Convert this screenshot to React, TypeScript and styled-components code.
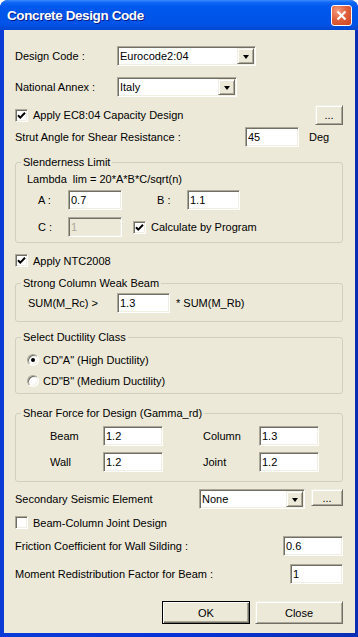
import styled, { createGlobalStyle, css } from 'styled-components'

const GlobalStyle = createGlobalStyle`
  * { box-sizing: border-box; }
  body {
    margin: 0;
    background: #fff;
    font-family: "Liberation Sans", Arial, sans-serif;
    font-size: 11px;
    color: #000;
  }
`

const sunken = css`
  border: 1px solid;
  border-color: #aca899 #fff #fff #aca899;
  box-shadow: inset 1px 1px 0 #716f64, inset -1px -1px 0 #f1efe2;
`

const raised = css`
  border: 1px solid;
  border-color: #f1efe2 #716f64 #716f64 #f1efe2;
  box-shadow: inset 1px 1px 0 #fff, inset -1px -1px 0 #aca899;
`

const Window = styled.div`
  width: 358px;
  height: 637px;
  display: flex;
  flex-direction: column;
  background: linear-gradient(90deg, #0a3bd6 0%, #0831d9 50%, #0a2fb5 100%);
  border-radius: 8px 8px 0 0;
  overflow: hidden;
`

const TitleBar = styled.div`
  height: 30px;
  flex: none;
  display: flex;
  align-items: center;
  justify-content: space-between;
  padding: 0 6px 0 7px;
  background: linear-gradient(
    180deg,
    #3a8cff 0%,
    #1068f5 8%,
    #0058ee 22%,
    #0055e8 55%,
    #0053e6 80%,
    #0047d0 100%
  );
`

const Title = styled.span`
  font-family: "Liberation Sans", Arial, sans-serif;
  font-weight: bold;
  font-size: 13.5px;
  letter-spacing: -0.4px;
  color: #fff;
  text-shadow: 1px 1px 0 #0a1a8a;
`

const CloseButton = styled.button`
  width: 21px;
  height: 21px;
  padding: 0;
  border: 1px solid #fff;
  border-radius: 3px;
  background: radial-gradient(circle at 30% 25%, #f39a7e 0%, #e2613d 45%, #cc4520 100%);
  display: flex;
  align-items: center;
  justify-content: center;
`

const Client = styled.div`
  flex: 1;
  margin: 0 3px 4px 4px;
  background: #ece9d8;
  padding: 0 12px 0 11px;
  display: flex;
  flex-direction: column;
`

const Row = styled.div<{ $mt: number; $h?: number; $pl?: number }>`
  display: flex;
  align-items: center;
  margin-top: ${(p) => p.$mt}px;
  height: ${(p) => p.$h ?? 20}px;
  padding-left: ${(p) => p.$pl ?? 0}px;
  flex: none;
`

const Label = styled.span<{ $w?: number }>`
  width: ${(p) => (p.$w ? `${p.$w}px` : 'auto')};
  flex: none;
  white-space: nowrap;
`

const Spacer = styled.span<{ $w?: number }>`
  flex: ${(p) => (p.$w ? 'none' : '1')};
  width: ${(p) => (p.$w ? `${p.$w}px` : 'auto')};
`

const TextBox = styled.input<{ $w: number }>`
  ${sunken};
  width: ${(p) => p.$w}px;
  height: 20px;
  padding: 0 2px;
  flex: none;
  font: 11px "Liberation Sans", Arial, sans-serif;
  color: #000;
  background: #fff;
  outline: none;
  &:disabled {
    background: #ece9d8;
    color: #aca899;
  }
`

const Combo = styled.div<{ $w: number }>`
  ${sunken};
  width: ${(p) => p.$w}px;
  height: 20px;
  flex: none;
  background: #fff;
  display: flex;
  align-items: center;
  padding: 1px 1px 1px 2px;
`

const ComboText = styled.span`
  flex: 1;
`

const DropButton = styled.span`
  ${raised};
  width: 17px;
  height: 16px;
  background: #ece9d8;
  display: flex;
  align-items: center;
  justify-content: center;
`

const Arrow = styled.span`
  width: 0;
  height: 0;
  border-left: 3.5px solid transparent;
  border-right: 3.5px solid transparent;
  border-top: 4px solid #000;
  margin-top: 1px;
`

const Button = styled.button<{ $w: number; $h: number; $default?: boolean; $top?: boolean }>`
  ${raised};
  width: ${(p) => p.$w}px;
  height: ${(p) => p.$h}px;
  flex: none;
  align-self: ${(p) => (p.$top ? 'flex-start' : 'auto')};
  padding: 0;
  background: #ece9d8;
  font: 11px "Liberation Sans", Arial, sans-serif;
  color: #000;
  ${(p) =>
    p.$default &&
    css`
      border: 1px solid #000;
      box-shadow: inset 1px 1px 0 #fff, inset -1px -1px 0 #716f64, inset -2px -2px 0 #aca899;
    `}
`

const CheckBox = styled.span`
  ${sunken};
  width: 13px;
  height: 13px;
  flex: none;
  background: #fff;
  display: flex;
  align-items: center;
  justify-content: center;
  margin-right: 5px;
`

const Radio = styled.span<{ $on?: boolean }>`
  width: 12px;
  height: 12px;
  flex: none;
  border-radius: 50%;
  border: 1px solid;
  border-color: #aca899 #fff #fff #aca899;
  box-shadow: inset 1px 1px 0 #716f64, inset -1px -1px 0 #f1efe2;
  background: #fff;
  display: flex;
  align-items: center;
  justify-content: center;
  margin-right: 4px;
  &::after {
    content: '';
    display: ${(p) => (p.$on ? 'block' : 'none')};
    width: 4px;
    height: 4px;
    border-radius: 50%;
    background: #000;
  }
`

const Group = styled.fieldset<{ $mt: number; $pt: number; $pb: number }>`
  margin: ${(p) => p.$mt}px 0 0;
  padding: ${(p) => p.$pt}px 0 ${(p) => p.$pb}px 0;
  border: 1px solid #d0d0bf;
  border-radius: 3px;
  min-width: 0;
  flex: none;
`

const GroupTitle = styled.legend`
  margin-left: 5px;
  padding: 0 2px;
  line-height: 13px;
  font-size: 11px;
`

const Check = () => (
  <svg width="9" height="9" viewBox="0 0 9 9">
    <path d="M1 4.2 L3.3 6.6 L8 1.8" fill="none" stroke="#000" strokeWidth="2" />
  </svg>
)

const Combobox = ({ w, value }: { w: number; value: string }) => (
  <Combo $w={w}>
    <ComboText>{value}</ComboText>
    <DropButton>
      <Arrow />
    </DropButton>
  </Combo>
)

export default function App() {
  return (
    <>
      <GlobalStyle />
      <Window>
        <TitleBar>
          <Title>Concrete Design Code</Title>
          <CloseButton aria-label="Close">
            <svg width="11" height="11" viewBox="0 0 11 11">
              <path d="M1.5 1.5 L9.5 9.5 M9.5 1.5 L1.5 9.5" stroke="#fff" strokeWidth="2.2" />
            </svg>
          </CloseButton>
        </TitleBar>
        <Client>
          <Row $mt={16}>
            <Label $w={102}>Design Code :</Label>
            <Combobox w={139} value="Eurocode2:04" />
          </Row>
          <Row $mt={11}>
            <Label $w={102}>National Annex :</Label>
            <Combobox w={120} value="Italy" />
          </Row>
          <Row $mt={8}>
            <CheckBox>
              <Check />
            </CheckBox>
            <Label>Apply EC8:04 Capacity Design</Label>
            <Spacer />
            <Button $w={28} $h={20}>...</Button>
          </Row>
          <Row $mt={2}>
            <Label $w={230}>Strut Angle for Shear Resistance :</Label>
            <TextBox $w={54} defaultValue="45" />
            <Spacer $w={10} />
            <Label>Deg</Label>
          </Row>

          <Group $mt={9} $pt={3} $pb={5}>
            <GroupTitle>Slenderness Limit</GroupTitle>
            <Row $mt={0} $h={14} $pl={11}>
              <Label>Lambda&nbsp; lim = 20*A*B*C/sqrt(n)</Label>
            </Row>
            <Row $mt={4} $pl={22}>
              <Label $w={30}>A :</Label>
              <TextBox $w={54} defaultValue="0.7" />
              <Spacer $w={35} />
              <Label $w={30}>B :</Label>
              <TextBox $w={53} defaultValue="1.1" />
            </Row>
            <Row $mt={7} $pl={22}>
              <Label $w={30}>C :</Label>
              <TextBox $w={54} defaultValue="1" disabled />
              <Spacer $w={11} />
              <CheckBox>
                <Check />
              </CheckBox>
              <Label>Calculate by Program</Label>
            </Row>
          </Group>

          <Row $mt={11} $h={13}>
            <CheckBox>
              <Check />
            </CheckBox>
            <Label>Apply NTC2008</Label>
          </Row>

          <Group $mt={10} $pt={3} $pb={8}>
            <GroupTitle>Strong Column Weak Beam</GroupTitle>
            <Row $mt={0} $pl={12}>
              <Label $w={89}>SUM(M_Rc) &gt;</Label>
              <TextBox $w={53} defaultValue="1.3" />
              <Spacer $w={6} />
              <Label>* SUM(M_Rb)</Label>
            </Row>
          </Group>

          <Group $mt={9} $pt={9} $pb={5}>
            <GroupTitle>Select Ductility Class</GroupTitle>
            <Row $mt={0} $h={14} $pl={11}>
              <Radio $on />
              <Label>CD"A" (High Ductility)</Label>
            </Row>
            <Row $mt={7} $h={14} $pl={11}>
              <Radio />
              <Label>CD"B" (Medium Ductility)</Label>
            </Row>
          </Group>

          <Group $mt={13} $pt={6} $pb={9}>
            <GroupTitle>Shear Force for Design (Gamma_rd)</GroupTitle>
            <Row $mt={0} $pl={34}>
              <Label $w={53}>Beam</Label>
              <TextBox $w={60} defaultValue="1.2" />
              <Spacer $w={40} />
              <Label $w={56}>Column</Label>
              <TextBox $w={60} defaultValue="1.3" />
            </Row>
            <Row $mt={6} $pl={34}>
              <Label $w={53}>Wall</Label>
              <TextBox $w={60} defaultValue="1.2" />
              <Spacer $w={40} />
              <Label $w={56}>Joint</Label>
              <TextBox $w={60} defaultValue="1.2" />
            </Row>
          </Group>

          <Row $mt={7}>
            <Label $w={184}>Secondary Seismic Element</Label>
            <Combobox w={106} value="None" />
            <Spacer $w={6} />
            <Button $w={32} $h={17} $top>
              ...
            </Button>
          </Row>
          <Row $mt={7} $h={13}>
            <CheckBox />
            <Label>Beam-Column Joint Design</Label>
          </Row>
          <Row $mt={7}>
            <Label>Friction Coefficient for Wall Silding :</Label>
            <Spacer />
            <TextBox $w={60} defaultValue="0.6" />
          </Row>
          <Row $mt={8}>
            <Label>Moment Redistribution Factor for Beam :</Label>
            <Spacer />
            <TextBox $w={53} defaultValue="1" />
          </Row>
          <Row $mt={17} $h={23}>
            <Spacer />
            <Button $w={88} $h={23} $default>
              OK
            </Button>
            <Spacer $w={5} />
            <Button $w={88} $h={23}>
              Close
            </Button>
          </Row>
        </Client>
      </Window>
    </>
  )
}
